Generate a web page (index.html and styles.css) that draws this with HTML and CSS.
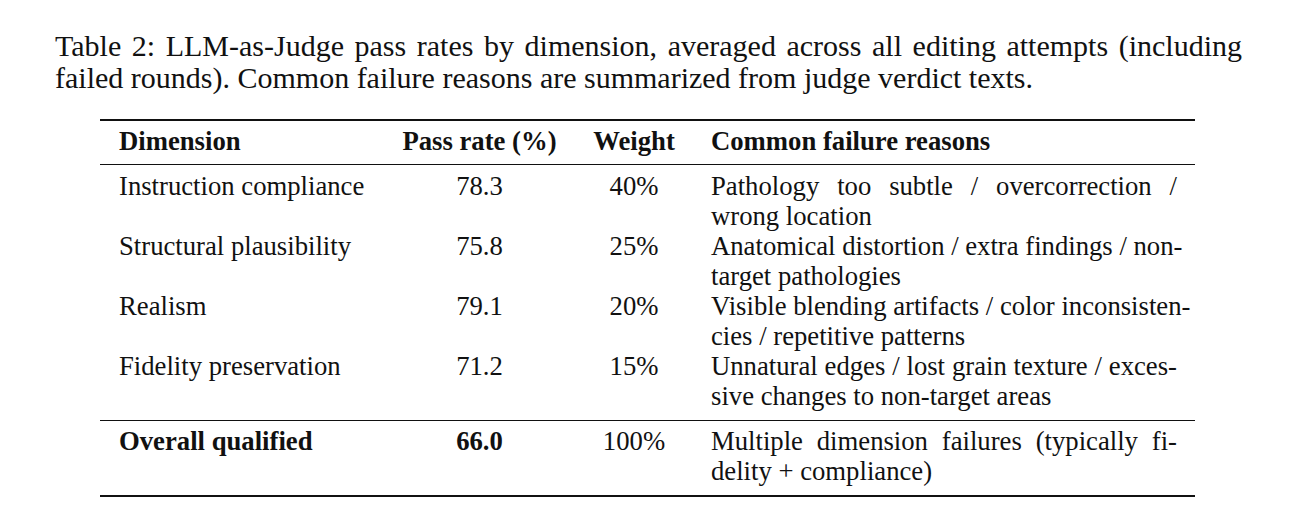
FILE: index.html
```html
<!DOCTYPE html>
<html>
<head>
<meta charset="utf-8">
<link rel="stylesheet" href="styles.css">
</head>
<body>
<div class="page">
  <p class="caption">
    <span class="jl">Table 2: LLM-as-Judge pass rates by dimension, averaged across all editing attempts (including</span>
    <span class="ll">failed rounds). Common failure reasons are summarized from judge verdict texts.</span>
  </p>
  <table class="results">
    <colgroup>
      <col class="c1"><col class="c2"><col class="c3"><col class="c4">
    </colgroup>
    <thead>
      <tr>
        <th class="left">Dimension</th>
        <th>Pass rate (%)</th>
        <th>Weight</th>
        <th class="left">Common failure reasons</th>
      </tr>
    </thead>
    <tbody class="dims">
      <tr>
        <td class="left">Instruction compliance</td>
        <td>78.3</td>
        <td>40%</td>
        <td class="left reason"><span class="jl">Pathology too subtle / overcorrection /</span><span class="ll">wrong location</span></td>
      </tr>
      <tr>
        <td class="left">Structural plausibility</td>
        <td>75.8</td>
        <td>25%</td>
        <td class="left reason"><span class="jl">Anatomical distortion / extra findings / non-</span><span class="ll">target pathologies</span></td>
      </tr>
      <tr>
        <td class="left">Realism</td>
        <td>79.1</td>
        <td>20%</td>
        <td class="left reason"><span class="jl">Visible blending artifacts / color inconsisten-</span><span class="ll">cies / repetitive patterns</span></td>
      </tr>
      <tr>
        <td class="left">Fidelity preservation</td>
        <td>71.2</td>
        <td>15%</td>
        <td class="left reason"><span class="jl">Unnatural edges / lost grain texture / exces-</span><span class="ll">sive changes to non-target areas</span></td>
      </tr>
    </tbody>
    <tbody class="total">
      <tr>
        <td class="left strong">Overall qualified</td>
        <td class="strong">66.0</td>
        <td>100%</td>
        <td class="left reason"><span class="jl">Multiple dimension failures (typically fi-</span><span class="ll">delity + compliance)</span></td>
      </tr>
    </tbody>
  </table>
</div>
</body>
</html>
```

FILE: styles.css
```css
html, body {
  margin: 0;
  padding: 0;
  background: #ffffff;
}

body {
  font-family: "Liberation Serif", "Times New Roman", serif;
  font-size: 26.7px;
  line-height: 30px;
  color: #111111;
}

.page {
  padding: 30px 0 0 55px;
}

.caption {
  margin: 0;
  width: 1187px;
  font-size: 30px;
  line-height: 31.5px;
}

.jl {
  display: block;
  text-align: justify;
  text-align-last: justify;
}

.ll {
  display: block;
  text-align: left;
}

.results {
  margin: 26px 0 0 45px;
  width: 1095px;
  table-layout: fixed;
  border-collapse: collapse;
  border-top: 2px solid #111111;
  border-bottom: 2px solid #111111;
}

.c1 { width: 284px; }
.c2 { width: 191px; }
.c3 { width: 118px; }
.c4 { width: 502px; }

.results th,
.results td {
  padding: 0 18px;
  text-align: center;
  vertical-align: top;
  white-space: nowrap;
}

.results th.left,
.results td.left {
  text-align: left;
}

.results th:first-child,
.results td:first-child {
  padding-left: 19px;
}

.results th {
  font-weight: bold;
  padding-top: 5px;
  padding-bottom: 8px;
  border-bottom: 1px solid #111111;
}

.dims tr:first-child td {
  padding-top: 6px;
}

.dims tr:last-child td {
  padding-bottom: 9px;
  border-bottom: 1px solid #111111;
}

.total td {
  padding-top: 5px;
  padding-bottom: 9px;
}

.strong {
  font-weight: bold;
}
```
